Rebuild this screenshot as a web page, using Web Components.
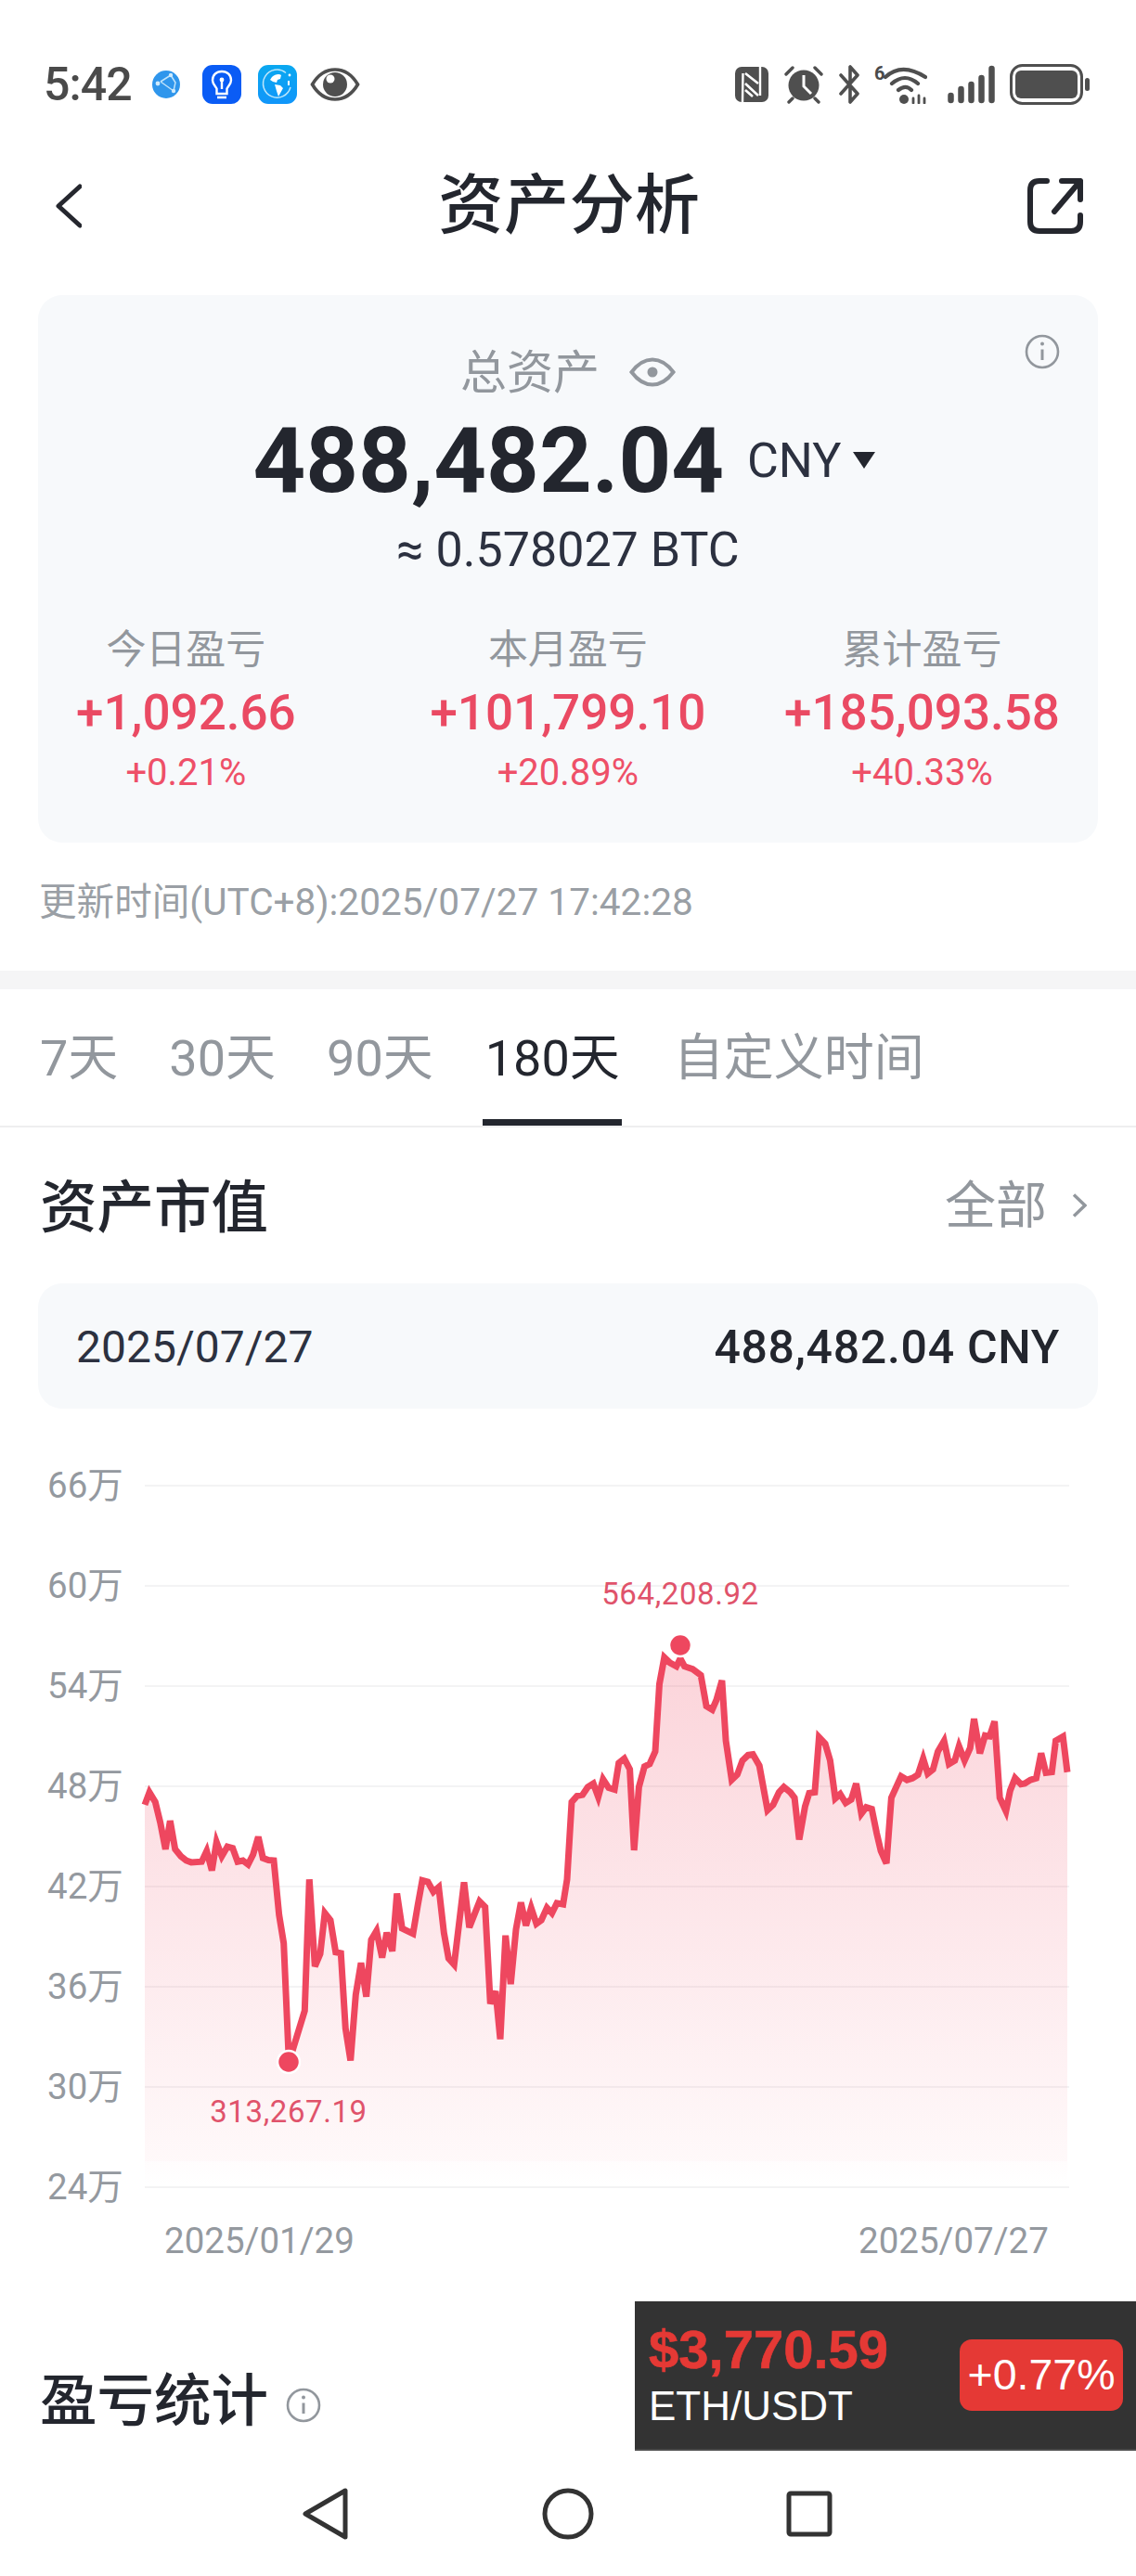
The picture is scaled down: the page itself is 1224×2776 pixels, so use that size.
<!DOCTYPE html>
<html lang="zh"><head><meta charset="utf-8"><title>资产分析</title>
<style>
html,body{margin:0;padding:0;background:#fff}
body{width:1224px;height:2776px;overflow:hidden;font-family:Roboto,"Noto Sans CJK SC",sans-serif;color:#23262e;display:flex;flex-direction:column}
</style></head><body>
<phone-status></phone-status>
<app-header>资产分析</app-header>
<page-main>
  <asset-card>
    <stat-item label="今日盈亏" value="+1,092.66" pct="+0.21%"></stat-item>
    <stat-item label="本月盈亏" value="+101,799.10" pct="+20.89%"></stat-item>
    <stat-item label="累计盈亏" value="+185,093.58" pct="+40.33%"></stat-item>
  </asset-card>
  <update-time>更新时间(UTC+8):2025/07/27 17:42:28</update-time>
  <range-tabs></range-tabs>
  <section-head more="全部">资产市值</section-head>
  <date-bar date="2025/07/27" value="488,482.04 CNY"></date-bar>
  <asset-chart></asset-chart>
  <stats-head>盈亏统计</stats-head>
  <price-ticker></price-ticker>
</page-main>
<nav-bar></nav-bar>
<script>
const CJK='Roboto,"Noto Sans CJK SC",sans-serif';
function def(name,css,html,setup){
  customElements.define(name,class extends HTMLElement{
    constructor(){super();const r=this.attachShadow({mode:'open'});
      r.innerHTML='<style>'+css+'</style>'+(typeof html==='function'?html(this):html);}
    connectedCallback(){
      if(typeof html==='function'){this.shadowRoot.innerHTML='<style>'+css+'</style>'+html(this);}
      if(setup)setup(this.shadowRoot,this);
    }
  });
}
const INFO=(s)=>`<svg width="${s}" height="${s}" viewBox="0 0 38 38" fill="none" stroke="#92979d" stroke-width="2.6"><circle cx="19" cy="19" r="17"/><path d="M19 16.5V28" stroke-width="3"/><circle cx="19" cy="10.5" r="2" fill="#92979d" stroke="none"/></svg>`;

def('phone-status',`:host{display:flex;align-items:center;height:42px;padding:70px 50px 28px 47px;flex:none;color:#4a4a4a}
.t{font:500 50px/42px Roboto,sans-serif;letter-spacing:-.9px;width:96px}
svg{display:block;flex:none}.sp{flex:1}.s{font:700 15px/1 Roboto,sans-serif}`,
`<span class="t">5:42</span>
<svg style="margin-left:21px" width="30" height="32" viewBox="0 0 30 32"><circle cx="15" cy="16" r="15" fill="#2f96ec"/><path d="M9 13 20 6M9 13l14 10M20 6l5 8-2 9M20 6l-3 2" stroke="#bfe3fb" stroke-width="1.5" fill="none"/><circle cx="6" cy="15" r="2.4" fill="#cfeafc"/><circle cx="20" cy="6" r="2.2" fill="#cfeafc"/><circle cx="23" cy="23" r="2.2" fill="#cfeafc"/></svg>
<svg style="margin-left:24px" width="42" height="42" viewBox="0 0 42 42"><rect width="42" height="42" rx="11" fill="#0a5cf5"/><path d="M21 7c-6 0-10 4-10 9.500 0 4 3 6 4.500 9V31h11v-5.500c1.500-3 4.500-5 4.500-9C31 11 27 7 21 7Z" fill="none" stroke="#fff" stroke-width="2.4"/><path d="M16 35h10M21 16v10" stroke="#fff" stroke-width="2.400"/><circle cx="21" cy="16" r="2.400" fill="#fff"/></svg>
<svg style="margin-left:18px" width="42" height="42" viewBox="0 0 42 42"><defs><linearGradient id="g" x1="0" y1="0" x2="0" y2="1"><stop offset="0" stop-color="#0aa8f0"/><stop offset="1" stop-color="#1196fa"/></linearGradient></defs><rect width="42" height="42" rx="11" fill="url(#g)"/><path d="M30 8.500A15 15 0 1 0 35 24" fill="none" stroke="#bce6fb" stroke-width="1.500"/><path d="M15 13c3-3 8-4 10-2l-1 4-3 1-1 3-4-1-3-2zM18 21l6 1 3 3-5 9-2-6z" fill="#fff"/><path d="M33 17v5" stroke="#fff" stroke-width="2"/><circle cx="34" cy="11" r="1.400" fill="#fff"/></svg>
<svg style="margin-left:14px" width="54" height="38" viewBox="0 0 54 38"><path d="M2.500 19C9 8 17 3 27 3s18 5 24.500 16C45 30 37 35 27 35S9 30 2.500 19Z" fill="none" stroke="#4f4f4f" stroke-width="3.600"/><circle cx="27" cy="19" r="13" fill="#4f4f4f"/><circle cx="22" cy="13" r="4.500" fill="#fff"/></svg>
<span class="sp"></span>
<svg width="36" height="38" viewBox="0 0 36 38"><rect width="36" height="38" rx="7" fill="#4f4f4f"/><path d="M8.500 7 8 38M27 0v31" stroke="#fff" stroke-width="2.400"/><path d="M11 7l14 11M11 18l14 13M11 25l8 7" stroke="#fff" stroke-width="2.600"/></svg>
<svg style="margin-left:17px" width="42" height="42" viewBox="0 0 42 42"><circle cx="21" cy="22" r="16.500" fill="#4f4f4f"/><path d="M21 11v12l8 8" fill="none" stroke="#fff" stroke-width="3"/><path d="M2 10l7-7M40 10l-7-7M9 36l-4 4M33 36l4 4" stroke="#4f4f4f" stroke-width="3.400" stroke-linecap="round"/></svg>
<svg style="margin-left:17px" width="24" height="42" viewBox="0 0 24 42" fill="none" stroke="#4f4f4f" stroke-width="3.600" stroke-linejoin="round" stroke-linecap="round"><path d="M2 11 20 31 12 40V24M2 31 20 11 12 2v16"/></svg>
<span style="margin-left:14px;width:57px;height:42px;position:relative;display:block;flex:none"><span class="s" style="position:absolute;left:0;top:-1px;font-size:20px">6</span>
<svg width="57" height="42" viewBox="0 0 57 42" fill="none" stroke="#4f4f4f" stroke-width="4.200" stroke-linecap="round"><path d="M12 13C24 2 38 2 55 13M19 20C28 12 38 12 47 20M26 27c5-4 10-4 14 0"/><circle cx="32" cy="37" r="5" fill="#4f4f4f" stroke="none"/><path d="M42 41v-5M48 33v8M54 41v-5" stroke-width="2.800"/></svg></span>
<svg style="margin-left:22px" width="51" height="42" viewBox="0 0 51 42" stroke="#4f4f4f" stroke-width="6.500" stroke-linecap="round"><path d="M3.500 38v-5M14.500 38V26M25.500 38V21M36.500 38V14M47.500 38V4"/></svg>
<svg style="margin-left:16px" width="86" height="44" viewBox="0 0 86 44" fill="none"><rect x="1.500" y="1.500" width="76" height="41" rx="12" stroke="#4f4f4f" stroke-width="3"/><rect x="6" y="7" width="67" height="30" rx="6" fill="#4f4f4f"/><rect x="81" y="15" width="5" height="14" rx="2.500" fill="#4f4f4f"/></svg>`);

def('app-header',`:host{display:grid;grid-template-columns:1fr auto 1fr;align-items:center;height:164px;padding:0 57px 0 60px;flex:none}
h1{margin:0;font:500 70px/164px ${CJK};color:#23262e;letter-spacing:.6px}
svg:last-child{justify-self:end}`,
`<svg width="28" height="48" viewBox="0 0 28 48" fill="none" stroke="#25272e" stroke-width="5" stroke-linecap="round" stroke-linejoin="round"><path d="M26 3 3 24l23 21"/></svg><h1><slot></slot></h1>
<svg width="60" height="60" viewBox="0 0 60 60" fill="none" stroke="#25272e" stroke-width="6" stroke-linecap="round" stroke-linejoin="round"><path d="M21 3H13Q3 3 3 13V47Q3 57 13 57H47Q57 57 57 47V40M57 23V3H37M57 3 29 36"/></svg>`);

def('page-main',`:host{display:block;position:relative;height:2337px;flex:none;overflow:hidden}`,`<slot></slot>`);

def('asset-card',`:host{display:block;margin:14px 41px 0;height:590px;box-sizing:border-box;padding-top:54px;background:#f7f9fb;border-radius:26px;position:relative;text-align:center}
.info{position:absolute;right:41px;top:42px;display:block}
.lab{display:flex;justify-content:center;align-items:center;gap:32px;height:60px;font:400 50px/60px ${CJK};color:#92979d;margin-left:0}
.lab svg{margin-top:-2px}
.num{display:flex;justify-content:center;align-items:center;margin-top:19px;height:90px;margin-left:-8px}
.big{font:700 99px/90px Roboto,sans-serif;color:#23262e;letter-spacing:0}
.cny{font:400 52px/90px Roboto,sans-serif;color:#2c3140;margin-left:25px;letter-spacing:0;position:relative;top:1px}
.tri{width:0;height:0;border:12px solid transparent;border-top:18px solid #23262e;border-bottom:0;margin-left:13px;position:relative;top:0}
.btc{margin-top:22px;font:400 52px/60px Roboto,sans-serif;color:#2c3140;height:59px}
.row{display:flex;justify-content:space-between;padding:0 41px 0 41px;margin-top:53px}
::slotted(stat-item:first-child){margin-right:60px}`,
`<div class="info">${INFO(38)}</div>
<div class="lab"><span>总资产</span><svg width="50" height="32" viewBox="0 0 50 32" fill="none" stroke="#92979d" stroke-width="4"><path d="M2.500 16C10 6 17 2.500 25 2.500S40 6 47.500 16C40 26 33 29.500 25 29.500S10 26 2.500 16Z"/><circle cx="25" cy="16" r="5.500" fill="#92979d" stroke="none"/></svg></div>
<div class="num"><span class="big">488,482.04</span><span class="cny">CNY</span><span class="tri"></span></div>
<div class="btc">≈ 0.578027 BTC</div>
<div class="row"><slot></slot></div>`);

def('stat-item',`:host{display:block;text-align:center}
.l{font:400 43px/50px ${CJK};color:#92979d}
.v{margin-top:13px;font:500 53px/60px Roboto,sans-serif;color:#ea4a63;white-space:nowrap}
.p{margin-top:12px;font:400 40px/46px Roboto,sans-serif;color:#ee5068}`,
h=>`<div class="l">${h.getAttribute('label')||''}</div><div class="v">${h.getAttribute('value')||''}</div><div class="p">${h.getAttribute('pct')||''}</div>`);

def('update-time',`:host{display:block;margin:0 42px;height:138px;box-sizing:border-box;padding-top:42px;font:400 40.600px/44px ${CJK};color:#9a9fa5;white-space:nowrap}`,`<slot></slot>`);

def('range-tabs',`:host{display:flex;border-top:20px solid #f5f5f6;border-bottom:2px solid #eeeeef;height:147px;box-sizing:content-box;padding-left:43px;flex:none;font:400 54px/1 ${CJK};color:#92979d}
span{display:block;position:relative;line-height:150px;white-space:nowrap}
.on{color:#23262e}.on::after{content:"";position:absolute;left:-3px;right:-2px;bottom:0;height:7px;background:#23262e}`,
`<span style="margin-right:55px">7天</span><span style="margin-right:55px">30天</span><span style="margin-right:56px">90天</span><span class="on" style="margin-right:58px">180天</span><span>自定义时间</span>`);

def('section-head',`:host{display:flex;align-items:center;justify-content:space-between;height:168px;padding:0 53px 0 43px}
h2{margin:8px 0 0;font:500 61.500px/1 ${CJK};color:#23262e}
.m{display:flex;align-items:center;font:400 55px/1 ${CJK};color:#92979d;gap:27px;margin-top:0}`,
h=>`<h2><slot></slot></h2><span class="m">${h.getAttribute('more')}<svg width="16" height="26" viewBox="0 0 16 26" fill="none" stroke="#92979d" stroke-width="3.400"><path d="M2 1.500 14 13 2 24.500"/></svg></span>`);

def('date-bar',`:host{display:flex;align-items:center;justify-content:space-between;margin:0 41px;height:135px;padding:0 41px;background:#f7f9fb;border-radius:26px;font:400 48px/1 Roboto,sans-serif;color:#2c3140}
span,b{position:relative;top:1px}b{font-weight:500;color:#23262e;font-size:50px;letter-spacing:.7px}`,h=>`<span>${h.getAttribute('date')}</span><b>${h.getAttribute('value')}</b>`);

const Z5=[75,640,93,605,112,632,128,690,145,765,160,685,176,765,195,785,212,797,228,802,262,800,278,770,295,825,310,745,327,785,345,758,362,762,378,800,395,797,412,808,428,780,445,730,460,790,478,796,495,797,512,950,527,1030,544,1365,595,1220,610,850,628,1095,645,1060,660,945,678,965,695,1055,712,1058,727,1270,743,1360,760,1175,777,1085,794,1180,810,1020,827,995,845,1070,860,1000,878,1052,893,890,910,988,945,1003,960,925,975,853,993,857,1011,885,1028,872,1045,1000,1060,1072,1078,1090,1110,858,1127,985,1160,912,1178,928,1195,1200,1212,1165,1227,1300,1244,1008,1261,1145,1278,990,1294,915,1310,980,1327,930,1344,975,1360,965,1378,930,1394,945,1410,917,1430,920,1443,850,1458,632,1475,615];
const Z6=[22,612,38,590,55,580,70,618,85,568,102,592,120,597,133,522,150,510,167,540,180,768,195,590,212,532,228,525,245,490,258,300,273,225,290,240,310,250,322,228,335,250,360,258,385,275,402,362,420,372,433,345,450,290,462,460,480,570,497,555,513,515,530,500,545,498,565,530,590,655,607,640,625,605,640,590,660,605,673,620,687,738,705,645,718,607,735,605,748,450,767,468,782,515,798,622,813,610,830,635,847,625,862,580,878,665,893,647,910,652,925,720,938,770,955,805,970,620,1000,560,1018,570,1035,565,1052,555,1068,510,1082,552,1098,540,1113,490,1132,460,1147,525,1165,515,1178,475,1195,515,1212,480,1224,398,1242,495,1258,445,1272,447,1287,405,1303,620,1322,658,1335,600,1350,565,1368,582,1380,580,1397,570,1415,565,1430,495,1445,550,1463,548,1475,460,1497,448,1512,548];
def('asset-chart',`:host{display:block;height:922px;position:relative}svg{display:block;position:absolute;left:0;top:0}
text{font-family:${CJK}}`,
()=>{
  const pts=[];
  for(let i=0;i<Z5.length;i+=2){pts.push([130+Z5[i]/3,1700+Z5[i+1]/2.613]);}
  for(let i=0;i<Z6.length;i+=2){pts.push([620+Z6[i]/2.85,1700+Z6[i+1]/2.613]);}
  pts[0][0]=156;pts[pts.length-1][0]=1150;
  const line=pts.map(p=>p[0].toFixed(1)+','+p[1].toFixed(1)).join(' ');
  const area=line+' 1150,2355 156,2355';
  const labs=['66万','60万','54万','48万','42万','36万','30万','24万'];
  let grid='',lab='';
  labs.forEach((l,i)=>{const y=1601+i*108;
    grid+=`<path d="M156 ${y}H1152" stroke="#f3f3f4" stroke-width="2"/>`;
    lab+=`<text x="51" y="${y+13}" font-size="38.500" fill="#94999f">${l}</text>`;});
  return `<svg width="1224" height="922" viewBox="0 1518 1224 922">
  <defs><linearGradient id="f" gradientUnits="userSpaceOnUse" x1="0" y1="1780" x2="0" y2="2355"><stop offset="0" stop-color="#f04a63" stop-opacity=".24"/><stop offset=".955" stop-color="#f04a63" stop-opacity=".035"/><stop offset=".955" stop-color="#f04a63" stop-opacity=".015"/><stop offset="1" stop-color="#f04a63" stop-opacity="0"/></linearGradient></defs>
  ${grid}${lab}
  <polygon points="${area}" fill="url(#f)"/>
  <polyline points="${line}" fill="none" stroke="#ee475f" stroke-width="7" stroke-linejoin="miter"/>
  <circle cx="311" cy="2222" r="12" fill="#ee475f" stroke="#fff" stroke-width="2.500"/>
  <circle cx="733" cy="1773" r="12" fill="#ee475f" stroke="#fff" stroke-width="2.500"/>
  <text x="311" y="2287" text-anchor="middle" font-size="33" letter-spacing=".6" fill="#e0536b">313,267.19</text>
  <text x="733" y="1729" text-anchor="middle" font-size="33" letter-spacing=".6" fill="#e0536b">564,208.92</text>
  <text x="177" y="2428" font-size="38.500" fill="#94999f">2025/01/29</text>
  <text x="925" y="2428" font-size="38.500" fill="#94999f">2025/07/27</text>
  </svg>`;});

def('stats-head',`:host{display:flex;align-items:center;gap:19px;padding:0 43px;height:136px;margin-top:81px}
h2{margin:0;font:500 61.500px/1 ${CJK};color:#23262e}`,`<h2><slot></slot></h2><svg style="margin-top:6px" width="38" height="38" viewBox="0 0 38 38" fill="none" stroke="#92979d" stroke-width="2.600"><circle cx="19" cy="19" r="17"/><path d="M19 16.500V28" stroke-width="3"/><circle cx="19" cy="10.500" r="2" fill="#92979d" stroke="none"/></svg>`);

def('price-ticker',`:host{position:absolute;right:0;bottom:0;width:540px;height:161px;box-sizing:border-box;background:#333;display:flex;align-items:center;justify-content:space-between;padding:0 14px 0 15px;font-family:"Liberation Sans",sans-serif;border-bottom:2px solid #4a4a4a}
.p{font-size:58px;font-weight:700;color:#e53935;line-height:60px;margin-top:-2px;-webkit-text-stroke:.6px #e53935}
.n{font-size:44px;color:#fff;line-height:46px;margin-top:8px}
.b{width:176px;height:77px;background:#e53935;border-radius:13px;color:#fff;font-size:46.500px;line-height:77px;text-align:center}`,
`<div><div class="p">$3,770.59</div><div class="n">ETH/USDT</div></div><div class="b">+0.77%</div>`);

def('nav-bar',`:host{display:flex;flex:1;padding-left:326px;align-items:center;height:135px;box-sizing:border-box}svg{display:block;flex:none}`,
`<svg width="49" height="56" viewBox="0 0 49 56" fill="none" stroke="#333" stroke-width="5" stroke-linejoin="round"><path d="M46 3v50L3 28Z"/></svg>
<svg style="margin-left:209px" width="56" height="56" viewBox="0 0 56 56" fill="none" stroke="#333" stroke-width="5"><circle cx="28" cy="28" r="25"/></svg>
<svg style="margin-left:207px" width="50" height="50" viewBox="0 0 50 50" fill="none" stroke="#333" stroke-width="5" stroke-linejoin="round"><rect x="3" y="3" width="44" height="44" rx="2"/></svg>`);
</script>
</body></html>
